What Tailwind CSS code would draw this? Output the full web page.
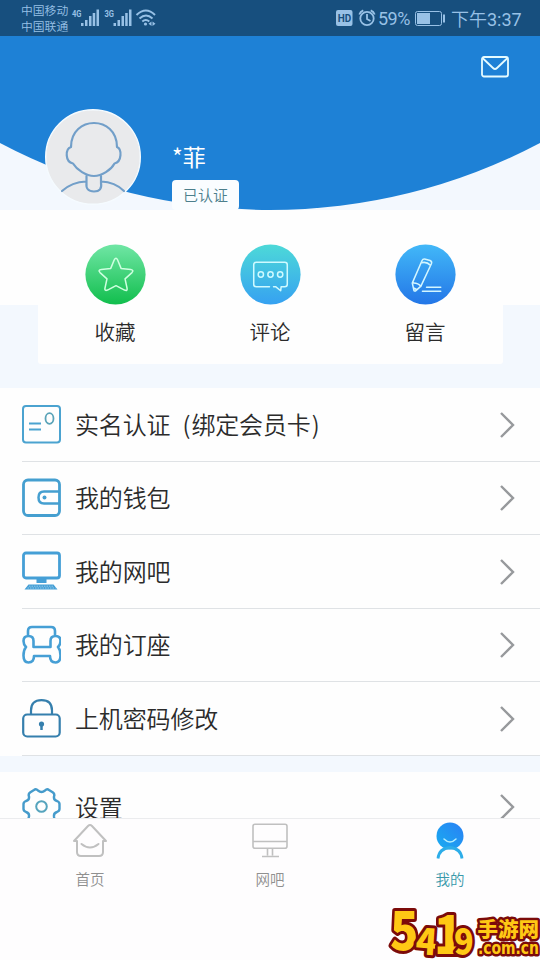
<!DOCTYPE html>
<html lang="zh-CN">
<head>
<meta charset="utf-8">
<title>我的</title>
<script src="https://cdn.jsdelivr.net/npm/@tailwindcss/browser@4"></script>
</head>
<body class="w-[540px] h-[960px] overflow-hidden bg-[#f3f8fe] font-['Noto_Sans_CJK_SC',sans-serif] font-[350] text-[#2b2b2b]">
<div class="relative flex h-[960px] w-[540px] flex-col overflow-hidden">

  <!-- status bar -->
  <div class="flex h-9 shrink-0 items-center bg-[#174f7e] pl-[21px] pr-[18px] text-[#98c1e6]">
    <div class="-mt-px w-12 text-[11.8px] leading-[16px] font-[350] whitespace-nowrap"><div>中国移动</div><div>中国联通</div></div>
    <svg class="ml-[2px] h-9 w-[90px]" viewBox="71 0 90 36" fill="#98c1e6">
      <g font-family="Roboto" font-size="9" font-weight="700"><text x="72" y="17" textLength="9.500" lengthAdjust="spacingAndGlyphs">4G</text><text x="104.500" y="17" textLength="9.500" lengthAdjust="spacingAndGlyphs">3G</text></g>
      <path d="M81 23h2.500v3H81zM85 20h2.500v6H85zM89 16h2.500v10H89zM92.700 13h2.500v13h-2.500zM96.500 9.500h2.500v16.500h-2.500zM113.500 23h2.500v3h-2.500zM117.500 20h2.500v6h-2.500zM121.500 16h2.500v10h-2.500zM125.200 13h2.500v13h-2.500zM129 9.500h2.500v16.500H129z"/>
      <g fill="none" stroke="#98c1e6" stroke-width="2"><path d="M136.500 15q9.500-9 18.500 0M139.500 18.500q6.500-6 13 0M142.300 21.500q3.500-3 7 0"/></g>
      <circle cx="145.500" cy="24" r="1.600"/><path d="M151.500 21.500v4.500l-3-2.200zM152.500 21.500v4.500l3-2.200z"/>
    </svg>
    <svg class="ml-auto h-9 w-[56px]" viewBox="333 0 56 36">
      <rect x="336" y="10" width="16.500" height="16" rx="2" fill="#98c1e6"/>
      <text x="337.700" y="21.900" font-family="Roboto" font-size="11" font-weight="700" fill="#174f7e" textLength="13.500" lengthAdjust="spacingAndGlyphs">HD</text>
      <g fill="none" stroke="#98c1e6" stroke-width="1.800"><circle cx="367" cy="18.500" r="6.700"/><path d="M367 14v5l3.500 2M359.300 14.500q1-3 4-4.200M374.700 14.500q-1-3-4-4.200"/></g>
    </svg>
    <div class="-ml-[11px] w-[33px] font-['Roboto',sans-serif] text-[18px] font-normal leading-9 tracking-[-0.5px] mt-[2px]">59%</div>
    <svg class="ml-[3px] h-9 w-[32px]" viewBox="415 0 32 36" fill="none"><rect x="416.500" y="11.500" width="26" height="14" rx="2" stroke="#98c1e6"/><rect x="418" y="13" width="13" height="11" fill="#98c1e6"/><path d="M445 14.500v8" stroke="#98c1e6" stroke-width="2"/></svg>
    <div class="ml-[5px] mt-[2px] w-[71px] whitespace-nowrap text-[18px] leading-9"><span>下午</span><span class="font-['Roboto',sans-serif] font-normal">3:37</span></div>
  </div>

  <!-- profile header -->
  <header class="relative h-[174px] shrink-0">
    <svg class="absolute inset-0 h-[174px] w-[540px]" viewBox="0 0 540 174"><path d="M0 0H540V107A577.600 577.600 0 0 1 0 107Z" fill="#1e81d6"/></svg>
    <div class="relative flex h-full pl-[45px] pt-[73px]">
      <svg class="size-24 shrink-0" viewBox="0 0 96 96" fill="none">
        <circle cx="48" cy="48" r="47.300" fill="#e9eaec" stroke="#f5fbff" stroke-width="1.400"/>
        <g stroke="#729fc9" stroke-width="2.200" stroke-linejoin="round" stroke-linecap="round"><path d="M26 38C26 6 72 6 72 38C77 40 77 53 69.500 54.500C66 61 57 67 49 67C41 67 32 61 28 54.500C20 53 20 40 26 38Z"/><path d="M41.500 67v7q-1 8.500 7.500 8.500t7-8.500v-7M17 82q10-9 24-9.500M56 72.500q14 .5 23 9.500"/></g>
      </svg>
      <div class="ml-[31px] flex flex-col items-start">
        <div class="mt-[31px] h-8 text-[23px] font-normal leading-8 text-white">*菲</div>
        <div class="mt-[8px] h-[30px] w-[67px] rounded-[4px] bg-[#fafdff] text-center text-[15px] leading-[30px] text-[#4c7f8c]">已认证</div>
      </div>
      <svg class="ml-auto -mt-[53px] mr-[31px] h-[22px] w-7" viewBox="0 0 28 22" fill="none" stroke="#e5fbff" stroke-width="1.800" stroke-linejoin="round"><rect x="1" y="1" width="26" height="19.500" rx="2"/><path d="M1.500 2l10.500 10q2 2 4 0L26.500 2"/></svg>
    </div>
  </header>

  <!-- shortcuts -->
  <section class="relative h-[178px] shrink-0">
    <div class="absolute inset-x-0 top-0 h-[95px] bg-[#fefefe]"></div>
    <div class="relative mx-auto grid h-[154px] w-[465px] grid-cols-3 rounded-b-[3px] bg-[#fefefe] pt-[34px] text-center leading-8">
      <div class="flex flex-col items-center">
        <svg class="size-[61px]" viewBox="0 0 60 60"><defs><linearGradient id="a" x2="0" y2="1"><stop stop-color="#70e6a5"/><stop offset="1" stop-color="#11be4d"/></linearGradient></defs><circle cx="30" cy="30" r="29.600" fill="url(#a)"/><path d="M28.800 15.500q1.700-3 3.200 0L35.500 24l9.500 1q3.400.7 1.200 3.100l-6.800 6.200 2 9.300q.4 3-2.500 1.700L30.500 41l-8.400 4.300q-2.900 1.200-2.500-1.700l2-9.300-6.800-6.200q-2.400-2.500 1.200-3.100l9.300-1z" fill="none" stroke="#cfffe0" stroke-width="1.500" stroke-linejoin="round"/></svg>
        <div class="mt-[10px] text-[20.500px]">收藏</div>
      </div>
      <div class="flex flex-col items-center">
        <svg class="size-[61px]" viewBox="0 0 60 60"><defs><linearGradient id="b" x2="0" y2="1"><stop stop-color="#4dd9d8"/><stop offset="1" stop-color="#36a1f1"/></linearGradient></defs><circle cx="30" cy="30" r="29.600" fill="url(#b)"/><g fill="none" stroke="#cffaff" stroke-width="1.500" stroke-linejoin="round" stroke-linecap="round"><path d="M29 42H16q-2.500 0-2.500-2.500v-19q0-2.500 2.500-2.500h28q2.500 0 2.500 2.500v19q0 2.500-2.500 2.500h-3.500l-.5 4-5-4h-2"/><circle cx="20.500" cy="30" r="2.600"/><circle cx="30" cy="30" r="2.600"/><circle cx="39.500" cy="30" r="2.600"/></g></svg>
        <div class="mt-[10px] text-[20.500px]">评论</div>
      </div>
      <div class="flex flex-col items-center">
        <svg class="size-[61px]" viewBox="0 0 60 60"><defs><linearGradient id="c" x2="0" y2="1"><stop stop-color="#42b8f8"/><stop offset="1" stop-color="#2376e7"/></linearGradient></defs><circle cx="30" cy="30" r="29.600" fill="url(#c)"/><g fill="none" stroke="#d3f6ff" stroke-width="1.500" stroke-linejoin="round" stroke-linecap="round"><path d="M26.500 16.500q1-2.200 3.500-1.500l4.500 1.200q2.200 1 1.300 3.200L25.500 41.500l-5.500 4.800q-1.500.2-1.500-1.300L17 38.500zM26 18.500q5-1.500 9 2.500M17 38.500q5.500-.5 8.500 3.200M19 43.500l2.500 1.500M31 42.500h14M27 46.500h18"/></g></svg>
        <div class="mt-[10px] text-[20.500px]">留言</div>
      </div>
    </div>
  </section>

  <!-- menu -->
  <main class="h-[430px] shrink-0 overflow-hidden text-2xl">
    <div class="bg-[#fefefe] pl-[22px]">
      <div class="flex h-[73.500px] items-center border-b-[1.500px] border-[#dfe2e5] pr-[25px]">
        <svg class="size-[39px]" viewBox="0 0 39 39" fill="none" stroke="#4ba3d0" stroke-width="2"><rect x="1" y="1" width="37" height="36.500" rx="3"/><path d="M7 18.500h12M7 24.500h12" stroke-width="2.200"/><ellipse cx="27.500" cy="13.500" rx="4" ry="5.300" stroke="#5aa3b8" stroke-width="1.800"/></svg>
        <span class="ml-[14px] whitespace-pre tracking-[-0.15px]">实名认证 <span class="ml-[7px]">(</span><span class="ml-px">绑定会员卡</span><span class="ml-px">)</span></span>
        <svg class="ml-auto mt-[2px] h-7 w-4" viewBox="0 0 16 28" fill="none" stroke="#97999c" stroke-width="2.400"><path d="M2 2l12 12L2 26"/></svg>
      </div>
      <div class="flex h-[73.500px] items-center border-b-[1.500px] border-[#dfe2e5] pr-[25px]">
        <svg class="size-[39px]" viewBox="0 0 39 39" fill="none" stroke="#459fd0" stroke-width="2.800"><rect x="1.500" y="2" width="36" height="35.500" rx="4.500"/><path d="M37.500 13.500H22q-5.500 0-5.500 6t5.500 6h15.500" stroke-width="2.500"/><circle cx="22.500" cy="19.500" r="2" fill="#459fd0" stroke="none"/></svg>
        <span class="ml-[14px] tracking-[-0.15px] -mt-px">我的钱包</span>
        <svg class="ml-auto mt-px h-7 w-4" viewBox="0 0 16 28" fill="none" stroke="#97999c" stroke-width="2.400"><path d="M2 2l12 12L2 26"/></svg>
      </div>
      <div class="flex h-[73.500px] items-center border-b-[1.500px] border-[#dfe2e5] pr-[25px]">
        <svg class="-mt-px size-[39px]" viewBox="0 0 39 39" fill="none"><rect x="1.500" y="2" width="36" height="25" rx="2.500" stroke="#459fd6" stroke-width="2.800"/><path d="M14.500 28h10v4h-10zM6.500 33.500h25l4 5H2.500z" fill="#459fd6"/><path d="M7 35.200h25M5.500 37h28" stroke="#c5e6f6" stroke-width=".6" stroke-dasharray="1.500 1"/></svg>
        <span class="ml-[14px] tracking-[-0.15px]">我的网吧</span>
        <svg class="ml-auto mt-[2px] h-7 w-4" viewBox="0 0 16 28" fill="none" stroke="#97999c" stroke-width="2.400"><path d="M2 2l12 12L2 26"/></svg>
      </div>
      <div class="flex h-[73.500px] items-center border-b-[1.500px] border-[#dfe2e5] pr-[25px]">
        <svg class="size-[39px]" viewBox="0 0 39 39" fill="none" stroke="#469fd5" stroke-width="2.600" stroke-linejoin="round"><path d="M6 11V6q0-4 4-4h19q4 0 4 4v5M11.500 22v-6q0-5-5-5t-5 5q0 3.500 2.500 6-2.500 3-2.500 8.500 0 7 5 7 5.500 0 5.500-6.500h16q0 6.500 5.500 6.500 5 0 5-7 0-5.500-2.500-8.500 2.500-2.500 2.500-6 0-5-5-5t-5 5v6z"/></svg>
        <span class="ml-[14px] tracking-[-0.15px] -mt-px">我的订座</span>
        <svg class="ml-auto mt-px h-7 w-4" viewBox="0 0 16 28" fill="none" stroke="#97999c" stroke-width="2.400"><path d="M2 2l12 12L2 26"/></svg>
      </div>
      <div class="flex h-[73.500px] items-center border-b-[1.500px] border-[#dfe2e5] pr-[25px]">
        <svg class="size-[39px]" viewBox="0 0 39 39" fill="none" stroke="#357fad" stroke-width="2.200"><rect x="1.200" y="15.500" width="36.500" height="22" rx="4"/><path d="M9 15v-3.500q0-10.300 10.500-10.300T30 11.500V15"/><path d="M19.500 26v5" stroke-width="2.500"/><circle cx="19.500" cy="25" r="2.600" fill="#357fad" stroke="none"/></svg>
        <span class="ml-[14px] tracking-[-0.15px]">上机密码修改</span>
        <svg class="ml-auto mt-[2px] h-7 w-4" viewBox="0 0 16 28" fill="none" stroke="#97999c" stroke-width="2.400"><path d="M2 2l12 12L2 26"/></svg>
      </div>
    </div>
    <div class="mt-[16px] flex h-[70px] items-center bg-[#fefefe] pl-[22px] pr-[25px]">
      <svg class="size-[39px]" viewBox="0 0 39 39" fill="none" stroke="#459bcb" stroke-width="2.400" stroke-linejoin="round"><path d="M12 3q2-1.500 4 .5 3.500 3 7 0 2-2 4-.5l4 2.500q2 1.500 1 4-.5 3.500 3 4.500 2.500 1 2.500 3v5q0 2-2.500 3-3.500 1-3 4.500.5 2.500-1 4l-4 2.500q-2 1.500-4-.5-3.500-3-7 0-2 2-4 .5L8 33.500q-2-1.500-1-4 .5-3.500-3-4.500-2.500-1-2.500-3v-5q0-2 2.500-3 3.500-1 3-4.500-1-2.500 1-4z"/><circle cx="19.500" cy="19.500" r="5.300" stroke="#55a4bd" stroke-width="2"/></svg>
      <span class="ml-[14px] tracking-[-0.15px]">设置</span>
      <svg class="ml-auto h-7 w-4" viewBox="0 0 16 28" fill="none" stroke="#97999c" stroke-width="2.400"><path d="M2 2l12 12L2 26"/></svg>
    </div>
  </main>

  <!-- tab bar -->
  <nav class="grid h-[142px] shrink-0 grid-cols-3 border-t border-[#ebecee] bg-[#fefdfe] pt-[3px] text-[14.500px] leading-6 text-[#909090]">
    <div class="flex flex-col items-center">
      <svg class="h-[38px] w-9" viewBox="0 0 36 38" fill="none" stroke="#c0c0c0" stroke-width="2" stroke-linejoin="round" stroke-linecap="round"><path d="M5 19H2L16 4q2-2 4 0l14 15h-3v11q0 4-4 4H9q-4 0-4-4z"/><path d="M9.500 22q8.500 7 17 0"/></svg>
      <div class="mt-[7px]">首页</div>
    </div>
    <div class="flex flex-col items-center">
      <svg class="h-[38px] w-9" viewBox="0 0 36 38" fill="none" stroke="#c0c0c0" stroke-width="1.600"><rect x="1" y="2.300" width="34" height="24" rx="2"/><path d="M1 19.500h34M15.500 26.500v7M20.500 26.500v7M10 34.500h17"/></svg>
      <div class="mt-[7px]">网吧</div>
    </div>
    <div class="flex flex-col items-center text-[#3999aa]">
      <svg class="h-[38px] w-9" viewBox="0 0 36 38" fill="none"><defs><linearGradient id="d" x1="1" x2="0" y2="1"><stop stop-color="#2a80f5"/><stop offset="1" stop-color="#18adf0"/></linearGradient></defs><circle cx="18" cy="14" r="13.500" fill="url(#d)"/><path d="M6 36.500q1-10 12-11 11 1 12 11" stroke="#2dade9" stroke-width="2.800"/><path d="M12 17q6 6 12 0" stroke="#b3efff" stroke-width="1.500" stroke-linecap="round"/></svg>
      <div class="mt-[7px]">我的</div>
    </div>
  </nav>

  <!-- site mark laid over the tab bar -->
  <svg class="absolute bottom-0 right-0 h-[60px] w-[152px]" viewBox="388 900 152 60" font-family="'Noto Sans CJK SC',sans-serif" font-weight="900" fill="#ffc814" stroke="#7c0b0a" stroke-linejoin="round" paint-order="stroke">
    <g stroke-width="6">
      <text transform="translate(390 950) scale(.88 1)" font-size="53">5</text>
      <text transform="translate(415 954) rotate(4) scale(.98 1)" font-size="36">4</text>
      <text transform="translate(434 954) scale(.9 1)" font-size="53">1</text>
      <text transform="translate(454 955) scale(.9 1)" font-size="36">9</text>
    </g>
    <g stroke-width="5"><text x="477.500" y="936.500" font-size="20.500">手游网</text><text x="478" y="954" font-size="17" font-family="'DejaVu Sans'" font-weight="700" textLength="61" lengthAdjust="spacingAndGlyphs">.com.cn</text></g>
  </svg>
</div>
</body>
</html>
